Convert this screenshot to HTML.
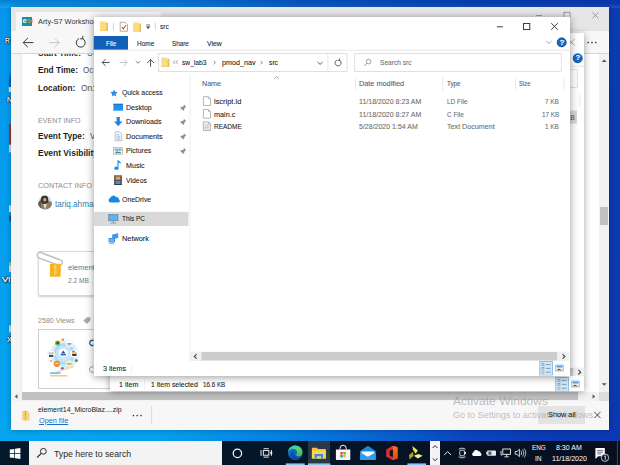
<!DOCTYPE html>
<html><head><meta charset="utf-8">
<style>
*{margin:0;padding:0;box-sizing:border-box}
html,body{width:620px;height:465px;overflow:hidden}
body{position:relative;font-family:"Liberation Sans",sans-serif;background:#0b3eae}
.a{position:absolute}
.t{position:absolute;white-space:nowrap;line-height:1}
.L{position:absolute;left:0;top:0;width:620px;height:465px}
svg{position:absolute;overflow:visible}
#ex1 .t,#ex2 .t{-webkit-text-stroke:.08px currentColor}
</style></head><body>
<!-- DESKTOP -->
<div class="a" style="left:0;top:0;width:620px;height:465px;background:linear-gradient(90deg,#0596eb 0%,#0582e1 25%,#055ac8 50%,#0546b9 75%,#0a3cb4 98%)"></div>
<div class="a" style="left:0;top:0;width:14px;height:465px;background:linear-gradient(180deg,#0596eb 0%,#05a0ee 60%,#05a5f0 100%)"></div>
<div class="a" style="left:0;top:422px;width:620px;height:20px;background:linear-gradient(90deg,#05a5f0 0%,#05a0ee 25%,#058ee6 37%,#0578dc 50%,#085fcd 63%,#0a46be 75%,#0a3cb4 87%,#0a38b0 100%)"></div>
<div class="a" style="left:606px;top:0;width:14px;height:465px;background:linear-gradient(180deg,#0a3cb4 0%,#0a38b0 100%)"></div>
<div class="a" style="left:0;top:0;width:620px;height:8px;background:linear-gradient(180deg,rgba(0,10,80,.16) 0%,rgba(0,10,80,.05) 45%,rgba(255,255,255,.10) 100%)"></div>
<svg style="left:0;top:0" width="620" height="465">
<path d="M11.500 72.500C8.600 75.500 8 84 9.600 88L11.500 92z" fill="#0a58be" opacity=".85"/>
<rect x="8.800" y="87" width="2.400" height="5" fill="#e4e0d4"/>
<rect x="9" y="124.300" width="2.200" height="20.400" fill="#b42a30"/>
<rect x="9" y="144.700" width="2.200" height="7.600" fill="#d8d6cc"/>
<rect x="9" y="205.500" width="2.200" height="6.500" fill="#e0dfd8"/>
<rect x="9.400" y="215.500" width="1.800" height="6" fill="#1a3a5a" opacity=".8"/>
<rect x="9" y="262.400" width="2.200" height="3.200" fill="#c8c83a"/>
<rect x="9" y="265.600" width="2.200" height="6.400" fill="#e4e2d8"/>
<rect x="9" y="325.400" width="2.200" height="7" fill="#dcdad0"/>
</svg>
<div class="t" style="left:5.20px;transform-origin:0 0;top:37.00px;font-size:7.5px;color:#fff;transform:scaleX(0.8853);text-shadow:0 0 1.2px #000,0 0 1.2px #000,0 0 1.5px #000,0.5px 0.5px 1px #000;-webkit-text-stroke:.25px #fff;">R</div>
<div class="t" style="left:7.40px;transform-origin:0 0;top:96.00px;font-size:7.5px;color:#fff;transform:scaleX(0.9591);text-shadow:0 0 1.2px #000,0 0 1.2px #000,0 0 1.5px #000,0.5px 0.5px 1px #000;-webkit-text-stroke:.25px #fff;">N</div>
<div class="t" style="left:2.00px;transform-origin:0 0;top:276.00px;font-size:7.5px;color:#fff;transform:scaleX(1.2678);text-shadow:0 0 1.2px #000,0 0 1.2px #000,0 0 1.5px #000,0.5px 0.5px 1px #000;-webkit-text-stroke:.25px #fff;">Vi</div>
<div class="t" style="left:7.40px;transform-origin:0 0;top:336.00px;font-size:7.5px;color:#fff;transform:scaleX(0.9969);text-shadow:0 0 1.2px #000,0 0 1.2px #000,0 0 1.5px #000,0.5px 0.5px 1px #000;-webkit-text-stroke:.25px #fff;">X</div>

<!-- BROWSER -->
<div class="a" style="left:11px;top:6.5px;width:598px;height:423.5px;background:#fff;box-shadow:0 0 5px rgba(0,0,0,.3)"></div>
<div class="L" id="br" style="clip-path:inset(6.5px 11px 35px 11px)">
<!-- page -->
<div class="a" style="left:11px;top:53.5px;width:10.5px;height:339px;background:#f4f4f4"></div>
<div class="a" style="left:21px;top:53.5px;width:1px;height:339px;background:#ececec"></div>
<!-- avatar -->
<svg style="left:0;top:0" width="620" height="465"><defs><clipPath id="avc"><circle cx="45.1" cy="202.4" r="7.1"/></clipPath></defs>
<g clip-path="url(#avc)"><rect x="38" y="195" width="15" height="15" fill="#d9e4e8"/>
<path d="M38 210v-6.500c1.500-1.500 3-2.500 4-3l6.500 0c1.500 .5 3 1.500 4 3v6.500z" fill="#8a7c66"/>
<path d="M43.200 203.500l1.900 6.500 1.900-6.500z" fill="#e4dccb"/>
<ellipse cx="44.600" cy="199.800" rx="3.700" ry="4.300" fill="#3b2f2a"/>
<ellipse cx="44.800" cy="199.900" rx="1.700" ry="2.100" fill="#c49f88"/>
<path d="M43.200 201.200h3.200l-.4 2.300h-2.400z" fill="#4a3a33"/>
<path d="M38 203c1-1.500 2-3 3-4v11h-3z" fill="#5a5048" opacity=".8"/>
</g></svg>
<!-- attachment card -->
<div class="a" style="left:37.7px;top:250.9px;width:120px;height:45.5px;background:#fff;border:1px solid #d8d8d8;border-radius:2px;box-shadow:0 1px 2px rgba(0,0,0,.2)"></div>
<svg style="left:0;top:0" width="620" height="465"><path d="M40.2 255.3L59.4 262.5" stroke="#c2c2c2" stroke-width="7.2" stroke-linecap="round"/><path d="M40.2 255.3L59.4 262.5" stroke="#fff" stroke-width="4.4" stroke-linecap="round"/><path d="M44 253.9L59 259.6" stroke="#c2c2c2" stroke-width="1.4" stroke-linecap="round"/>
<rect x="49.9" y="263.8" width="10.8" height="12.9" fill="#f8b41c"/><path d="M55.2 265v9.6" stroke="#fff" stroke-width="2.6" stroke-dasharray="1 .8" opacity=".55"/>
<!-- tag icon -->
<path d="M83.4 320.6l3.6-3.4h3.4v3.4l-3.6 3.4z" fill="#a9a9a9"/>
</svg>
<!-- card2 -->
<div class="a" style="left:38px;top:329.2px;width:120px;height:59.7px;background:#fff;border:1px solid #cfcfcf"></div>
<svg style="left:0;top:0" width="620" height="465">
<defs><radialGradient id="glow"><stop offset="0" stop-color="#d8eefb"/><stop offset=".55" stop-color="#bfe3f8"/><stop offset=".8" stop-color="#d6edfb" stop-opacity=".8"/><stop offset="1" stop-color="#fff" stop-opacity="0"/></radialGradient></defs>
<circle cx="64.5" cy="354.5" r="16.5" fill="url(#glow)"/>
<circle cx="64" cy="354" r="9.5" fill="none" stroke="#9fd3f3" stroke-width="2.2" opacity=".7"/>
<circle cx="57.6" cy="343" r="2.6" fill="#7db93e"/><circle cx="57.6" cy="343" r="1.2" fill="#3d4a2a"/>
<circle cx="62.8" cy="339.8" r="1.3" fill="#f08c28"/>
<circle cx="69.3" cy="343.6" r="3.6" fill="#fff" stroke="#dfeaf2" stroke-width=".5"/><rect x="67.2" y="343.4" width="4.2" height="1" fill="#2a6cb0"/><rect x="67.6" y="344.8" width="3" height=".8" fill="#f39a3a"/>
<circle cx="51.2" cy="354.3" r="3.9" fill="#fff" stroke="#dfe6ea" stroke-width=".5"/><rect x="48.6" y="352.6" width="5.2" height="1" fill="#9a9a9a"/><rect x="49" y="354.8" width="4.4" height="2.2" fill="#4a4a4a"/>
<circle cx="63.3" cy="353" r="4.6" fill="#fff" stroke="#d8e8f2" stroke-width=".5"/><path d="M61 353.600l2.300-3 2.300 3z" fill="#2a4f9a"/><rect x="60.600" y="354" width="5.400" height="1.400" fill="#2f66b5"/>
<circle cx="74.4" cy="353.6" r="4.100" fill="#fff" stroke="#dfe6ea" stroke-width=".5"/><rect x="72" y="352.400" width="4.800" height="1.300" fill="#e8932e"/><rect x="72.200" y="354" width="4.400" height="2" fill="#3a3a3a"/><rect x="72" y="350.800" width="3" height="1" fill="#3a78c0"/>
<circle cx="56.8" cy="363.8" r="3.100" fill="#f28b2a"/><path d="M55.200 363.400h3.200" stroke="#fff" stroke-width=".8"/>
<circle cx="69.3" cy="364" r="4" fill="#eef0d8" stroke="#d8dcc0" stroke-width=".5"/><rect x="67" y="363" width="4.600" height="1.800" fill="#8a9a5a" opacity=".6"/>
<circle cx="62.4" cy="368.5" r="1.600" fill="#8b5fb0"/><circle cx="76.4" cy="360.600" r="1.500" fill="#3f9a5a"/><circle cx="51.2" cy="361" r="1" fill="#f0a040"/>
<path d="M56 372.200l18-6" stroke="#f8d2ae" stroke-width="1.600" opacity=".8"/>
<rect x="50" y="372.400" width="10.600" height="1.400" fill="#4a9fd8" opacity=".85"/><rect x="50" y="375.100" width="17.300" height="1.400" fill="#f6b07a" opacity=".85"/>
<path d="M93.500 340.600a2.600 2.600 0 1 0 0 4.600" fill="none" stroke="#1c5f9c" stroke-width="1.300"/>
<path d="M93.500 367a2.800 2.800 0 1 0 0 5" fill="none" stroke="#6aa9d6" stroke-width="1"/>
</svg>
<div class="t" style="left:38.20px;transform-origin:0 0;top:50.00px;font-size:8.2px;color:#1f1f1f;font-weight:bold;transform:scaleX(1.0111);">Start Time:</div>
<div class="t" style="left:86.50px;transform-origin:0 0;top:50.00px;font-size:8.2px;color:#555;transform:scaleX(0.9412);">O</div>
<div class="t" style="left:38.20px;transform-origin:0 0;top:67.00px;font-size:8.2px;color:#1f1f1f;font-weight:bold;transform:scaleX(1.0143);">End Time:</div>
<div class="t" style="left:83.10px;transform-origin:0 0;top:67.00px;font-size:8.2px;color:#555;transform:scaleX(0.9743);">Oc</div>
<div class="t" style="left:38.20px;transform-origin:0 0;top:85.00px;font-size:8.2px;color:#1f1f1f;font-weight:bold;transform:scaleX(1.0097);">Location:</div>
<div class="t" style="left:80.80px;transform-origin:0 0;top:85.00px;font-size:8.2px;color:#555;transform:scaleX(1.0376);">On:</div>
<div class="t" style="left:38.20px;transform-origin:0 0;top:117.00px;font-size:7px;color:#8c8c8c;transform:scaleX(1.0169);">EVENT INFO</div>
<div class="t" style="left:38.20px;transform-origin:0 0;top:133.00px;font-size:8.2px;color:#1f1f1f;font-weight:bold;transform:scaleX(1.0194);">Event Type:</div>
<div class="t" style="left:89.80px;transform-origin:0 0;top:133.00px;font-size:8.2px;color:#555;transform:scaleX(0.9621);">Ve</div>
<div class="t" style="left:38.20px;transform-origin:0 0;top:150.00px;font-size:8.2px;color:#1f1f1f;font-weight:bold;transform:scaleX(1.0324);">Event Visibility:</div>
<div class="t" style="left:38.20px;transform-origin:0 0;top:182.00px;font-size:7px;color:#8c8c8c;transform:scaleX(1.0374);">CONTACT INFO</div>
<div class="t" style="left:55.00px;transform-origin:0 0;top:201.00px;font-size:8.2px;color:#2d7fae;transform:scaleX(0.9942);">tariq.ahmad</div>
<div class="t" style="left:67.80px;transform-origin:0 0;top:264.00px;font-size:7.6px;color:#2d7fae;transform:scaleX(0.9868);">element14</div>
<div class="t" style="left:67.80px;transform-origin:0 0;top:277.00px;font-size:7px;color:#777;transform:scaleX(0.9420);">2.2 MB</div>
<div class="t" style="left:38.20px;transform-origin:0 0;top:317.00px;font-size:7.2px;color:#8c8c8c;transform:scaleX(0.9884);">2580 Views</div>
<!-- tab bar -->
<div class="a" style="left:11px;top:6.5px;width:598px;height:24.5px;background:#e6e6e6"></div>
<div class="a" style="left:16px;top:11.8px;width:145px;height:19.2px;background:#f7f7f7;border-radius:3px 3px 0 0"></div>
<!-- favicon -->
<div class="a" style="left:22px;top:16.5px;width:10px;height:9.5px;background:#1b8daa"></div>
<div class="t" style="left:22.6px;top:16.6px;font-size:8px;font-weight:bold;color:#e8f6fa">e</div>
<div class="t" style="left:27px;top:18px;font-size:6px;font-weight:bold;color:#f28a1e;letter-spacing:-.5px">14</div>
<!-- window controls -->
<svg style="left:0;top:0" width="620" height="40"><g stroke="#8a8a8a" stroke-width=".8" fill="none">
<path d="M536 15.5h6"/><rect x="564" y="12.3" width="6" height="6"/><path d="M592.4 12.4l6 6M598.4 12.4l-6 6"/></g></svg>
<!-- toolbar -->
<div class="a" style="left:11px;top:31px;width:598px;height:22.5px;background:#f7f7f7;border-bottom:1px solid #d6d6d6"></div>
<svg style="left:0;top:0" width="620" height="60"><g fill="none" stroke-width="1" stroke-linecap="round" stroke-linejoin="round">
<path d="M33 42.6H23.2M27.6 38.2l-4.4 4.4 4.4 4.4" stroke="#3a3a3a"/>
<path d="M49.4 42.6h9.8M54.8 38.2l4.4 4.4-4.4 4.4" stroke="#c9c9c9"/>
<path d="M82.2 38.4a4.5 4.5 0 1 1-3.6.3" stroke="#3a3a3a"/><path d="M82.8 36.2v2.6h-2.6" stroke="#3a3a3a" stroke-width=".9"/>
</g>
<g fill="#333"><circle cx="588.2" cy="42.5" r=".85"/><circle cx="592" cy="42.5" r=".85"/><circle cx="595.8" cy="42.5" r=".85"/></g></svg>
<!-- vscroll -->
<div class="a" style="left:599px;top:53.5px;width:10px;height:339px;background:#f1f1f1"></div>
<div class="a" style="left:600.4px;top:207px;width:7.7px;height:17.7px;background:#c1c1c1"></div>
<svg style="left:0;top:0" width="620" height="465"><path d="M601.8 62l2.4-2.6 2.4 2.6z" fill="#505050"/><path d="M601.8 383.2l2.4 2.6 2.4-2.6z" fill="#505050"/></svg>
<!-- hscroll -->
<div class="a" style="left:11px;top:391.6px;width:598px;height:9.4px;background:#f1f1f1"></div>
<div class="a" style="left:22px;top:392.4px;width:556px;height:8px;background:#c1c1c1"></div>
<div class="a" style="left:599px;top:391.6px;width:10px;height:9.4px;background:#dcdcdc"></div>
<svg style="left:0;top:0" width="620" height="465"><path d="M17.4 394.2l-2.6 2.3 2.6 2.3z" fill="#505050"/><path d="M592.6 394.2l2.6 2.3-2.6 2.3z" fill="#505050"/></svg>
<!-- download bar -->
<div class="a" style="left:11px;top:401px;width:598px;height:29px;background:#f7f7f7"></div>
<svg style="left:0;top:0" width="620" height="465">
<path d="M22.2 411h5.2l2.2 2.2v7.4h-7.4z" fill="#f4d37a"/><path d="M25.4 411v9.4" stroke="#b8943a" stroke-width="1.2" stroke-dasharray=".9 .9"/>
<g fill="#333"><circle cx="133.4" cy="415.6" r=".8"/><circle cx="137.2" cy="415.6" r=".8"/><circle cx="141" cy="415.6" r=".8"/></g>
<path d="M151.6 406v18" stroke="#dadada" stroke-width="1"/>
</svg>
<div class="a" style="left:538.3px;top:405.9px;width:46.5px;height:18.4px;background:rgba(224,224,224,.9)"></div>
<svg style="left:0;top:0" width="620" height="465"><path d="M594.3 411.9l6.2 6.2M600.5 411.9l-6.2 6.2" stroke="#333" stroke-width=".9"/></svg>

<div class="t" style="left:37.90px;transform-origin:0 0;top:18.00px;font-size:7.5px;color:#333;transform:scaleX(0.9816);">Arty-S7 Workshop</div>
<div class="t" style="left:38.20px;transform-origin:0 0;top:406.00px;font-size:7.5px;color:#1b1b1b;transform:scaleX(0.9284);">element14_MicroBlaz....zip</div>
<div class="t" style="left:38.70px;transform-origin:0 0;top:417.00px;font-size:7.5px;color:#1a6fc9;transform:scaleX(0.9723);text-decoration:underline;">Open file</div>
<div class="t" style="left:452.50px;transform-origin:0 0;top:396.00px;font-size:11.5px;color:rgba(150,150,150,.62);transform:scaleX(1.0467);">Activate Windows</div>
<div class="t" style="left:452.50px;transform-origin:0 0;top:411.00px;font-size:8.6px;color:rgba(150,150,150,.62);transform:scaleX(1.0504);">Go to Settings to activate Windows.</div>
<div class="t" style="left:547.70px;transform-origin:0 0;top:411.00px;font-size:7.5px;color:#111;transform:scaleX(0.9767);">Show all</div>
</div>

<!-- EXPLORER 2 -->
<div class="a" style="left:109.5px;top:33.2px;width:474.9px;height:358.2px;background:#fff;box-shadow:0 1px 7px rgba(0,0,0,.38)"></div>
<div class="L" id="ex2" style="clip-path:inset(33.2px 35.6px 73.6px 109.5px)">
<svg style="left:0;top:0" width="620" height="465">
<!-- close x (partial) -->
<path d="M568.100 38.900l6.600 6.600M574.700 38.900l-6.600 6.600" stroke="#9a9a9a" stroke-width=".85"/>
<path d="M109.500 66.200h476" stroke="#e4e4e4" stroke-width=".8"/>
<circle cx="577.700" cy="58.300" r="4.900" fill="#1767c4"/><circle cx="577.700" cy="58.300" r="4.300" fill="none" stroke="#0f55a8" stroke-width=".6"/>
<rect x="370.700" y="69.600" width="206.600" height="17.800" fill="#fff" stroke="#d9d9d9" stroke-width=".8"/>
<path d="M579.900 93.400v13" stroke="#e5e5e5" stroke-width=".9"/>
<rect x="216" y="110.600" width="361" height="13" fill="#d9d9d9"/>
<!-- hscroll -->
<rect x="206.500" y="367.600" width="379" height="8.400" fill="#f0f0f0"/>
<rect x="217.500" y="368" width="355.600" height="8" fill="#cdcdcd"/>
<path d="M578.400 369.900l2.300 2.300-2.300 2.300" fill="none" stroke="#404040" stroke-width="1.100"/>
<!-- status -->
<path d="M144.600 379v11" stroke="#eeeeee" stroke-width=".8"/>
<rect x="555.800" y="377.500" width="12.600" height="13.800" fill="#cde8fb" stroke="#6fb4e8" stroke-width=".8"/>
<g stroke="#6a7a8a" stroke-width=".7"><path d="M562 380.600h4.600M562 384.400h4.600M562 388.200h4.600"/></g>
<g fill="none" stroke-width=".6"><rect x="558" y="379.600" width="2" height="2" stroke="#7a8a9a"/><rect x="558" y="383.400" width="2" height="2" stroke="#7a8a9a"/><rect x="558" y="387.200" width="2" height="2" stroke="#d98a7a"/></g>
<rect x="571.800" y="381" width="7.400" height="6" fill="#f4f4f4" stroke="#8a8a8a" stroke-width=".6"/><rect x="572.600" y="381.800" width="5.800" height="1.600" fill="#4a90e2"/><path d="M572.600 386.200l2-1.800 3.800 1.800z" fill="#4a6a4a"/>
</svg>
<div class="t" style="left:575.6px;top:54.400px;font-size:8px;font-weight:bold;color:#fff">?</div>

<div class="t" style="left:118.70px;transform-origin:0 0;top:381.00px;font-size:7.5px;color:#222;transform:scaleX(0.9443);">1 item</div>
<div class="t" style="left:151.40px;transform-origin:0 0;top:381.00px;font-size:7.5px;color:#222;transform:scaleX(0.9276);">1 item selected</div>
<div class="t" style="left:203.20px;transform-origin:0 0;top:381.00px;font-size:7.5px;color:#222;transform:scaleX(0.8319);">16.6 KB</div>
<div class="t" style="left:561.30px;transform-origin:0 0;top:114.00px;font-size:7.5px;color:#555;transform:scaleX(0.8546);">7 KB</div>
</div>

<!-- EXPLORER 1 -->
<div class="a" style="left:93.5px;top:17.2px;width:476px;height:358.4px;background:#fff;box-shadow:0 1px 8px rgba(0,0,0,.42)"></div>
<div class="L" id="ex1" style="clip-path:inset(17.2px 50.5px 89.4px 93.5px)">
<!-- title bar icons -->
<svg style="left:0;top:0" width="620" height="465">
<defs>
<g id="fold"><path d="M0 .6h5.2l.9 1.1h1.9v8.1H0z" fill="#f9dc84"/><path d="M6.3 1.7h1.7v8.1H6.3z" fill="#e9c35f"/><path d="M0 9.2h8v.6H0z" fill="#e3bd58"/></g>
<g id="pin"><path d="M3.6 .3l2.5 2.5-.9.3-1.2 1.2.1 1.5-.8.8-1.5-1.5L.3 6.6 .1 6.4l1.5-1.5L.1 3.4l.8-.8 1.5.1 1.2-1.2z" fill="#8e8e8e"/></g>
<g id="page"><path d="M.4 .4h5l2.1 2.1v6.7H.4z" fill="#fff" stroke="#9a9a9a" stroke-width=".7"/><path d="M5.4 .4v2.1h2.1" fill="none" stroke="#9a9a9a" stroke-width=".6"/></g>
</defs>
<use href="#fold" x="100" y="21"/>
<path d="M113.4 22.5v7.2M155.3 22.5v7.2" stroke="#bdbdbd" stroke-width=".7"/>
<path d="M120.2 22.3h5l2.3 2.3v6.6h-7.3z" fill="#fff" stroke="#8a8a8a" stroke-width=".7"/>
<path d="M121.8 27.2l1.4 1.6 2.9-3.6" fill="none" stroke="#e0522c" stroke-width="1.1"/>
<use href="#fold" x="133" y="21.8"/>
<path d="M146.2 25h4" stroke="#444" stroke-width=".8"/><path d="M146 26.6h4.4l-2.2 2.4z" fill="#444"/>
<!-- controls -->
<g stroke="#1b1b1b" stroke-width=".85" fill="none"><path d="M496.8 26.8h6.2"/><rect x="523.6" y="23.4" width="6.2" height="6.2"/><path d="M551.2 23.1l6.6 6.6M557.8 23.1l-6.6 6.6"/></g>
<!-- ribbon -->
<rect x="93.5" y="36" width="34.5" height="13.8" fill="#1060b8"/>
<path d="M93.5 50.2h476" stroke="#e4e4e4" stroke-width=".8"/>
<path d="M546.3 41.2l2.5 2.3 2.5-2.3" fill="none" stroke="#8a8a8a" stroke-width=".8"/>
<circle cx="561.7" cy="42.4" r="4.9" fill="#1767c4"/><circle cx="561.7" cy="42.4" r="4.3" fill="none" stroke="#0f55a8" stroke-width=".6"/>
<!-- nav arrows -->
<g fill="none" stroke-width=".95" stroke-linecap="round" stroke-linejoin="round">
<path d="M109.3 62.5H102.2M105.4 59.3l-3.2 3.2 3.2 3.2" stroke="#4a4a4a"/>
<path d="M119.9 62.5h7.2M123.9 59.3l3.2 3.2-3.2 3.2" stroke="#c6c6c6"/>
<path d="M136 61.3l2 1.9 2-1.9" stroke="#6a6a6a" stroke-width=".85"/>
<path d="M150.6 66.4V59.6M147.4 62.8l3.2-3.2 3.2 3.2" stroke="#4a4a4a"/>
</g>
<!-- address box -->
<rect x="158.5" y="53.6" width="188.5" height="17.8" fill="#fff" stroke="#d9d9d9" stroke-width=".8"/>
<use href="#fold" x="161.3" y="57"/>
<path d="M175 60.4l-1.7 1.8 1.7 1.8M177.7 60.4l-1.7 1.8 1.7 1.8" fill="none" stroke="#666" stroke-width=".6"/>
<path d="M213.6 60.8l1.7 1.8-1.7 1.8M260.6 60.8l1.7 1.8-1.7 1.8" fill="none" stroke="#555" stroke-width=".7"/>
<path d="M317.6 62l2.5 2.4 2.5-2.4" fill="none" stroke="#444" stroke-width=".9"/>
<path d="M327.9 54v17" stroke="#e0e0e0" stroke-width=".8"/>
<path d="M339.2 60.1a3 3 0 1 1-2.4.1" fill="none" stroke="#444" stroke-width=".85"/><path d="M339.6 58.4v2h-2" fill="none" stroke="#444" stroke-width=".8"/>
<!-- search box -->
<rect x="354.7" y="53.6" width="206.6" height="17.8" fill="#fff" stroke="#d9d9d9" stroke-width=".8"/>
<circle cx="368.6" cy="61.6" r="2.3" fill="none" stroke="#777" stroke-width=".7"/><path d="M366.9 63.4l-2.6 2.6" stroke="#777" stroke-width=".8"/>
<!-- nav pane -->
<path d="M190 75v286" stroke="#efefef" stroke-width="1"/>
<rect x="93.5" y="211.8" width="95" height="14.2" fill="#d9d9d9"/>
<!-- star -->
<path d="M114 89.4l1.1 2.4 2.6.3-1.9 1.8.5 2.6-2.3-1.3-2.3 1.3.5-2.6-1.9-1.8 2.6-.3z" fill="#2f8de4"/>
<!-- desktop -->
<rect x="113.4" y="103.8" width="9.6" height="6.8" fill="#1e90f0"/><rect x="113.4" y="103.8" width="9.6" height="1" fill="#1570c8"/><rect x="113.4" y="109.6" width="9.6" height="1" fill="#4aa8f5"/>
<!-- downloads -->
<path d="M116.6 117h3.2v4.6h2.6l-4.2 4.6-4.2-4.6h2.6z" fill="#2a7fe0"/>
<!-- documents -->
<path d="M115.2 131.8h4.4l2.2 2.2v6.8h-6.6z" fill="#fdfdfd" stroke="#9a9a9a" stroke-width=".6"/><path d="M116.6 134.6h2.4M116.6 136.2h3.8M116.6 137.8h3.8M116.6 139.2h3.8" stroke="#5b9bd8" stroke-width=".6"/>
<!-- pictures -->
<rect x="113.6" y="147.6" width="9" height="6.6" fill="#fafafa" stroke="#9a9a9a" stroke-width=".6"/><rect x="114.6" y="148.6" width="7" height="2.2" fill="#6bb5ee"/><path d="M114.6 153.2l2.4-2.2 1.6 1.2 1.2-.8 1.8 1.8z" fill="#4e8a4e"/>
<!-- music -->
<path d="M118 160.2v7.6" stroke="#1e8ff0" stroke-width="1.1"/><path d="M118 160.2c1 .4 3.2 1.8 3.2 4.4-.8-1.4-2-1.9-3.2-2z" fill="#1e8ff0"/><ellipse cx="116.4" cy="168.2" rx="2.1" ry="1.7" fill="#1e8ff0"/>
<!-- videos -->
<rect x="114" y="175.4" width="8" height="9.6" fill="#3c3c3c"/><rect x="115.6" y="176.4" width="4.8" height="3.4" fill="#e8a33a"/><rect x="115.6" y="180.6" width="4.8" height="3.4" fill="#4a8ed0"/><path d="M114.7 176v8.6M121.3 176v8.6" stroke="#ddd" stroke-width=".7" stroke-dasharray=".8 .9"/>
<!-- onedrive -->
<path d="M110.6 202.6a2.3 2.3 0 0 1-.3-4.5 3.1 3.1 0 0 1 5.7-1 2.6 2.6 0 0 1 3 2.5 1.6 1.6 0 0 1-.6 3z" fill="#1a86e2"/>
<!-- this pc -->
<rect x="108.6" y="214.4" width="9.4" height="6.4" fill="#3aa0ee" stroke="#7a8a99" stroke-width=".6"/><rect x="109.4" y="215.2" width="7.8" height="4.8" fill="#55b8f6"/><path d="M110.6 223h5.4M113.3 220.8v2" stroke="#7a8a99" stroke-width=".8"/>
<!-- network -->
<rect x="112.2" y="234.2" width="6" height="4.6" fill="#3f97e6" transform="skewY(-12) translate(0,24.2)"/><rect x="108.6" y="238" width="6.4" height="4.4" fill="#2d84d8"/><rect x="109.3" y="238.7" width="5" height="3" fill="#69b6f2"/><path d="M109.6 243.4h4.4" stroke="#6b7b8b" stroke-width=".7"/>
<!-- pins -->
<use href="#pin" x="180.2" y="104.2"/><use href="#pin" x="180.2" y="118.5"/><use href="#pin" x="180.2" y="133"/><use href="#pin" x="180.2" y="147.5"/>
<!-- header seps -->
<path d="M355.5 77.4v13M442.7 77.4v13M515.6 77.4v13M563.9 77.4v13" stroke="#e5e5e5" stroke-width=".9"/>
<path d="M274.2 78.8l2.4-2.3 2.4 2.3" fill="none" stroke="#8a8a8a" stroke-width=".75"/>
<!-- file icons -->
<use href="#page" x="203" y="96.3"/><use href="#page" x="203" y="109"/>
<g transform="translate(203,121.4)"><path d="M.4 .4h5l2.1 2.1v6.7H.4z" fill="#f4f4f4" stroke="#9a9a9a" stroke-width=".7"/><path d="M5.4 .4v2.1h2.1" fill="none" stroke="#9a9a9a" stroke-width=".6"/><path d="M1.6 3.4h4.6M1.6 4.8h4.6M1.6 6.2h4.6M1.6 7.6h4.6" stroke="#b4b4b4" stroke-width=".6"/></g>
<!-- hscroll -->
<rect x="190.5" y="351.6" width="379" height="9.4" fill="#f0f0f0"/>
<rect x="201.5" y="352" width="355.6" height="8.4" fill="#cdcdcd"/>
<path d="M196.6 354.1l-2.3 2.3 2.3 2.3" fill="none" stroke="#404040" stroke-width="1.1"/>
<path d="M562.6 354.1l2.3 2.3-2.3 2.3" fill="none" stroke="#404040" stroke-width="1.1"/>
<!-- status -->
<path d="M131.6 363v11" stroke="#eeeeee" stroke-width=".8"/>
<rect x="539.8" y="361.5" width="12.6" height="13.8" fill="#cde8fb" stroke="#6fb4e8" stroke-width=".8"/>
<g stroke="#6a7a8a" stroke-width=".7"><path d="M546 364.6h4.6M546 368.4h4.6M546 372.2h4.6"/></g>
<g fill="none" stroke-width=".6"><rect x="542" y="363.6" width="2" height="2" stroke="#7a8a9a"/><rect x="542" y="367.4" width="2" height="2" stroke="#7a8a9a"/><rect x="542" y="371.2" width="2" height="2" stroke="#d98a7a"/></g>
<rect x="555.8" y="365" width="7.4" height="6" fill="#f4f4f4" stroke="#8a8a8a" stroke-width=".6"/><rect x="556.6" y="365.8" width="5.8" height="1.6" fill="#4a90e2"/><path d="M556.6 370.2l2-1.8 3.8 1.8z" fill="#4a6a4a"/>
</svg>
<div class="t" style="left:559.6px;top:38.5px;font-size:8px;font-weight:bold;color:#fff">?</div>

<div class="t" style="left:160.00px;transform-origin:0 0;top:23.00px;font-size:7.5px;color:#222;transform:scaleX(0.8800);">src</div>
<div class="t" style="left:105.90px;transform-origin:0 0;top:40.00px;font-size:7.5px;color:#fff;transform:scaleX(0.8517);">File</div>
<div class="t" style="left:136.80px;transform-origin:0 0;top:40.00px;font-size:7.5px;color:#222;transform:scaleX(0.8643);">Home</div>
<div class="t" style="left:172.40px;transform-origin:0 0;top:40.00px;font-size:7.5px;color:#222;transform:scaleX(0.8393);">Share</div>
<div class="t" style="left:207.20px;transform-origin:0 0;top:40.00px;font-size:7.5px;color:#222;transform:scaleX(0.9178);">View</div>
<div class="t" style="left:182.30px;transform-origin:0 0;top:59.00px;font-size:7.5px;color:#222;transform:scaleX(0.8899);">sw_lab3</div>
<div class="t" style="left:221.50px;transform-origin:0 0;top:59.00px;font-size:7.5px;color:#222;transform:scaleX(0.9563);">pmod_nav</div>
<div class="t" style="left:268.70px;transform-origin:0 0;top:59.00px;font-size:7.5px;color:#222;transform:scaleX(0.9000);">src</div>
<div class="t" style="left:379.50px;transform-origin:0 0;top:59.00px;font-size:7.5px;color:#6d6d6d;transform:scaleX(0.8784);">Search src</div>
<div class="t" style="left:121.50px;transform-origin:0 0;top:89.00px;font-size:7.5px;color:#222;transform:scaleX(0.9101);">Quick access</div>
<div class="t" style="left:126.30px;transform-origin:0 0;top:104.00px;font-size:7.5px;color:#222;transform:scaleX(0.9340);">Desktop</div>
<div class="t" style="left:126.30px;transform-origin:0 0;top:118.00px;font-size:7.5px;color:#222;transform:scaleX(0.9566);">Downloads</div>
<div class="t" style="left:126.30px;transform-origin:0 0;top:133.00px;font-size:7.5px;color:#222;transform:scaleX(0.9674);">Documents</div>
<div class="t" style="left:126.30px;transform-origin:0 0;top:147.00px;font-size:7.5px;color:#222;transform:scaleX(0.9338);">Pictures</div>
<div class="t" style="left:126.30px;transform-origin:0 0;top:162.00px;font-size:7.5px;color:#222;transform:scaleX(0.9544);">Music</div>
<div class="t" style="left:126.30px;transform-origin:0 0;top:177.00px;font-size:7.5px;color:#222;transform:scaleX(0.9168);">Videos</div>
<div class="t" style="left:121.50px;transform-origin:0 0;top:196.00px;font-size:7.5px;color:#222;transform:scaleX(0.9215);">OneDrive</div>
<div class="t" style="left:121.50px;transform-origin:0 0;top:215.00px;font-size:7.5px;color:#222;transform:scaleX(0.8586);">This PC</div>
<div class="t" style="left:121.50px;transform-origin:0 0;top:235.00px;font-size:7.5px;color:#222;transform:scaleX(0.9813);">Network</div>
<div class="t" style="left:201.50px;transform-origin:0 0;top:80.00px;font-size:7.5px;color:#4c607a;transform:scaleX(0.9493);">Name</div>
<div class="t" style="left:359.40px;transform-origin:0 0;top:80.00px;font-size:7.5px;color:#4c607a;transform:scaleX(0.9745);">Date modified</div>
<div class="t" style="left:447.00px;transform-origin:0 0;top:80.00px;font-size:7.5px;color:#4c607a;transform:scaleX(0.8361);">Type</div>
<div class="t" style="left:519.20px;transform-origin:0 0;top:80.00px;font-size:7.5px;color:#4c607a;transform:scaleX(0.7949);">Size</div>
<div class="t" style="left:214.00px;transform-origin:0 0;top:98.00px;font-size:7.5px;color:#222;transform:scaleX(0.9922);">lscript.ld</div>
<div class="t" style="left:214.00px;transform-origin:0 0;top:111.00px;font-size:7.5px;color:#222;transform:scaleX(0.9641);">main.c</div>
<div class="t" style="left:214.00px;transform-origin:0 0;top:123.00px;font-size:7.5px;color:#222;transform:scaleX(0.8662);">README</div>
<div class="t" style="left:359.40px;transform-origin:0 0;top:98.00px;font-size:7.5px;color:#6d6d6d;transform:scaleX(0.9370);">11/18/2020 8:23 AM</div>
<div class="t" style="left:359.40px;transform-origin:0 0;top:111.00px;font-size:7.5px;color:#6d6d6d;transform:scaleX(0.9370);">11/18/2020 8:27 AM</div>
<div class="t" style="left:359.40px;transform-origin:0 0;top:123.00px;font-size:7.5px;color:#6d6d6d;transform:scaleX(0.9338);">5/28/2020 1:54 AM</div>
<div class="t" style="left:447.00px;transform-origin:0 0;top:98.00px;font-size:7.5px;color:#6d6d6d;transform:scaleX(0.8668);">LD File</div>
<div class="t" style="left:447.00px;transform-origin:0 0;top:111.00px;font-size:7.5px;color:#6d6d6d;transform:scaleX(0.8523);">C File</div>
<div class="t" style="left:447.00px;transform-origin:0 0;top:123.00px;font-size:7.5px;color:#6d6d6d;transform:scaleX(0.9534);">Text Document</div>
<div class="t" style="left:545.30px;transform-origin:0 0;top:98.00px;font-size:7.5px;color:#6d6d6d;transform:scaleX(0.8546);">7 KB</div>
<div class="t" style="left:542.00px;transform-origin:0 0;top:111.00px;font-size:7.5px;color:#6d6d6d;transform:scaleX(0.8416);">17 KB</div>
<div class="t" style="left:545.30px;transform-origin:0 0;top:123.00px;font-size:7.5px;color:#6d6d6d;transform:scaleX(0.8546);">1 KB</div>
<div class="t" style="left:102.50px;transform-origin:0 0;top:365.00px;font-size:7.5px;color:#222;transform:scaleX(0.9592);">3 items</div>
</div>

<!-- TASKBAR -->
<div class="L" id="tb" style="clip-path:inset(440.5px 0 0 0)">
<div class="a" style="left:0;top:440.5px;width:620px;height:24.5px;background:linear-gradient(90deg,#03192b 0%,#04172a 40%,#061222 75%,#070f1f 100%)"></div>
<div class="a" style="left:29.4px;top:441px;width:193px;height:24px;background:#f3f3f3"></div>
<div class="a" style="left:308px;top:440.7px;width:22.4px;height:24.3px;background:#2a3946"></div>
<div class="a" style="left:430px;top:441px;width:10.3px;height:24px;background:#f4f4f4"></div>
<svg style="left:0;top:0" width="620" height="465">
<!-- win logo -->
<path d="M9.8 449.6l4.4-.7v4.3H9.8zM14.9 448.8l5.5-.9v5.3h-5.5zM9.8 453.9h4.4v4.2l-4.4-.6zM14.9 453.9h5.5v5.2l-5.5-.8z" fill="#fff"/>
<!-- search -->
<circle cx="43.4" cy="451.3" r="2.9" fill="none" stroke="#2b2b2b" stroke-width="1"/><path d="M41.2 453.5l-4.1 4" stroke="#2b2b2b" stroke-width="1.1"/>
<!-- cortana -->
<circle cx="237.4" cy="453.4" r="4.2" fill="none" stroke="#fff" stroke-width="1.25"/>
<!-- task view -->
<g fill="none" stroke="#fff" stroke-width=".9"><rect x="263.3" y="450.6" width="5.6" height="4.6"/><path d="M261 450v5.8M271.4 450v5.8M263.6 448.7h5.2M263.6 457.1h5.2"/></g>
<rect x="270.4" y="451.8" width="1.8" height="2.2" fill="#fff"/>
<!-- edge -->
<defs><linearGradient id="eg1" x1="0" y1="0" x2="1" y2="1"><stop offset="0" stop-color="#36c4d8"/><stop offset=".5" stop-color="#58d46a"/><stop offset="1" stop-color="#3cb84a"/></linearGradient>
<linearGradient id="eg2" x1="0" y1="0" x2="0" y2="1"><stop offset="0" stop-color="#1a7fd6"/><stop offset="1" stop-color="#0c4fa8"/></linearGradient></defs>
<circle cx="295.2" cy="452.9" r="7.3" fill="url(#eg2)"/>
<path d="M288 452c.4-4 3.6-6.5 7.2-6.5 4.4 0 7.4 3.2 7.3 7 0 2.300-1.600 3.800-3.800 3.800-1.800 0-2.600-.800-2.400-1.700.500-.600.900-1.300.900-2.400 0-2-1.900-3.500-4.300-3.500-2.300 0-4.200 1.300-4.900 3.300z" fill="url(#eg1)"/>
<path d="M291.800 457.400c-1-1.300-1.300-3.100-.600-4.700.800-1.700 2.500-2.500 4-2.500-1.400.700-2.200 2.300-1.700 4.100.6 2.200 2.800 3.600 5.400 3.400-1.600 1.900-5.300 2-7.100-.300z" fill="#0b3f8f" opacity=".55"/>
<rect x="285.8" y="463.4" width="18.9" height="1.6" fill="#8ec4f0"/>
<!-- explorer -->
<rect x="308" y="463.4" width="22.4" height="1.6" fill="#8ec4f0"/>
<path d="M311.900 447.700h5l1.100 1.300h7.800v9.600h-13.900z" fill="#f7c32c"/><path d="M311.900 450.600h13.900v8h-13.900z" fill="#fad65c"/><path d="M314.600 454h8.500v4.600h-8.500z" fill="#3a8ee0"/><path d="M316.800 456.300h4.100v2.300h-4.100z" fill="#fad65c"/>
<!-- store -->
<path d="M335.900 449.600h14.400v9.300a1.200 1.200 0 0 1-1.200 1.200h-12a1.200 1.200 0 0 1-1.200-1.200z" fill="#f6f6f6"/><path d="M340 449.600v-1.300a3.100 3.100 0 0 1 6.200 0v1.300" fill="none" stroke="#f6f6f6" stroke-width="1"/>
<rect x="340.300" y="452" width="2.500" height="2.500" fill="#f25022"/><rect x="343.300" y="452" width="2.500" height="2.500" fill="#7fba00"/><rect x="340.300" y="455" width="2.500" height="2.500" fill="#00a4ef"/><rect x="343.300" y="455" width="2.500" height="2.500" fill="#ffb900"/>
<!-- mail -->
<path d="M360.100 451l7.800-5.300 7.800 5.300v9h-15.600z" fill="#1b86e0"/><path d="M361.600 451.400h12.600v4l-6.300 3.300-6.300-3.300z" fill="#fff"/><path d="M360.100 452.200l7.800 4.600 7.800-4.600v7.800h-15.600z" fill="#2f9df0"/>
<!-- office -->
<defs><linearGradient id="of1" x1="0" y1="0" x2="0" y2="1"><stop offset="0" stop-color="#e2262c"/><stop offset=".6" stop-color="#dc2a3c"/><stop offset="1" stop-color="#e05a9a"/></linearGradient>
<linearGradient id="of2" x1="0" y1="0" x2="0" y2="1"><stop offset="0" stop-color="#f47a14"/><stop offset="1" stop-color="#e8420e"/></linearGradient></defs>
<path d="M386.200 449.600L392.800 445.800 397.600 447.200V458.600L392.800 460 386.200 456.400z" fill="url(#of1)"/>
<path d="M392.800 445.800L397.600 447.200V458.600L392.800 460z" fill="url(#of2)"/>
<path d="M389.700 450.700L392.900 449.600V457L389.700 456z" fill="#07162a"/>
<path d="M386.200 456.400l3.500-.5 3.100 1.100v3z" fill="#d42a2e"/>
<!-- vivado -->
<path d="M412.300 446L417.900 450.500 415.500 453.700 413 449.700z" fill="#e6e65a"/>
<path d="M409 454.900L413 451.700 413.500 456.100 409.400 459.400z" fill="#aaa222"/>
<path d="M413.900 455.700L418.300 454.100 422.700 455.700 417.900 458.400z" fill="#eef08c"/>
<rect x="407.400" y="463.400" width="18.700" height="1.600" fill="#8ec4f0"/>
<!-- scroller -->
<path d="M432.700 448l2.400-2.400 2.400 2.400M432.700 458.300l2.400 2.400 2.400-2.400" fill="none" stroke="#2a2a2a" stroke-width="1"/>
<!-- tray -->
<path d="M444.200 455l3.400-3.300 3.400 3.300" fill="none" stroke="#fff" stroke-width=".9"/>
<g fill="none" stroke="#fff" stroke-width=".8"><rect x="459.800" y="450.200" width="4.600" height="5.600" rx="1"/><path d="M458.700 449.300c1.800-1.500 5-1.500 6.800 0M458.700 456.700c1.800 1.500 5 1.500 6.800 0"/></g><rect x="464.300" y="451.800" width="1.500" height="2.400" fill="#fff"/>
<path d="M473.700 455.900a1.900 1.900 0 0 1-.2-3.700 2.600 2.600 0 0 1 4.800-.9 2.200 2.200 0 0 1 2.500 2.100 1.300 1.300 0 0 1-.5 2.500z" fill="#fff"/>
<rect x="487.200" y="450.600" width="8.800" height="5.200" rx=".8" fill="#e8e8e8"/><rect x="486.300" y="451.800" width="1.200" height="2.600" fill="#fff"/><rect x="488.400" y="451.600" width="3" height="3.200" fill="#556"/>
<g fill="none" stroke="#fff" stroke-width=".85"><rect x="502.800" y="449" width="7.600" height="5.300"/><path d="M506.600 454.300v2M504.400 456.800h4.400"/><path d="M501 450.800v4.200h1.400"/></g>
<path d="M515.200 451.500h1.800l2.400-2.300v7.400l-2.400-2.300h-1.800z" fill="none" stroke="#fff" stroke-width=".8"/><path d="M520.900 450.800c1 1.200 1 3 0 4.200M522.500 449.500c1.700 2 1.700 4.900 0 6.900M524.100 448.400c2.200 2.700 2.200 6.400 0 9.100" fill="none" stroke="#fff" stroke-width=".7"/>
<!-- notif -->
<path d="M595.400 448h9.400v8.200h-6.500l-2.900 2.700z" fill="#fff"/><path d="M597.200 450.400h5.800M597.200 452.200h5.800M597.200 454h4" stroke="#0a1628" stroke-width=".6"/>
<circle cx="605" cy="457.700" r="3.700" fill="#0a1322" stroke="#e8e8e8" stroke-width=".8"/><path d="M604.300 456.400l1-.7v4" fill="none" stroke="#fff" stroke-width=".8"/>
<path d="M617.400 441v24" stroke="#5a6470" stroke-width=".7"/>
</svg>

<div class="t" style="left:53.60px;transform-origin:0 0;top:449.00px;font-size:9.4px;color:#2b2b2b;transform:scaleX(0.9317);">Type here to search</div>
<div class="t" style="left:531.50px;transform-origin:0 0;top:444.00px;font-size:7.5px;color:#fff;transform:scaleX(0.8423);">ENG</div>
<div class="t" style="left:535.40px;transform-origin:0 0;top:455.00px;font-size:7.5px;color:#fff;transform:scaleX(0.8800);">IN</div>
<div class="t" style="left:555.50px;transform-origin:0 0;top:444.00px;font-size:7.5px;color:#fff;transform:scaleX(0.9371);">8:30 AM</div>
<div class="t" style="left:551.60px;transform-origin:0 0;top:455.00px;font-size:7.5px;color:#fff;transform:scaleX(0.9436);">11/18/2020</div>
</div>
</body></html>
